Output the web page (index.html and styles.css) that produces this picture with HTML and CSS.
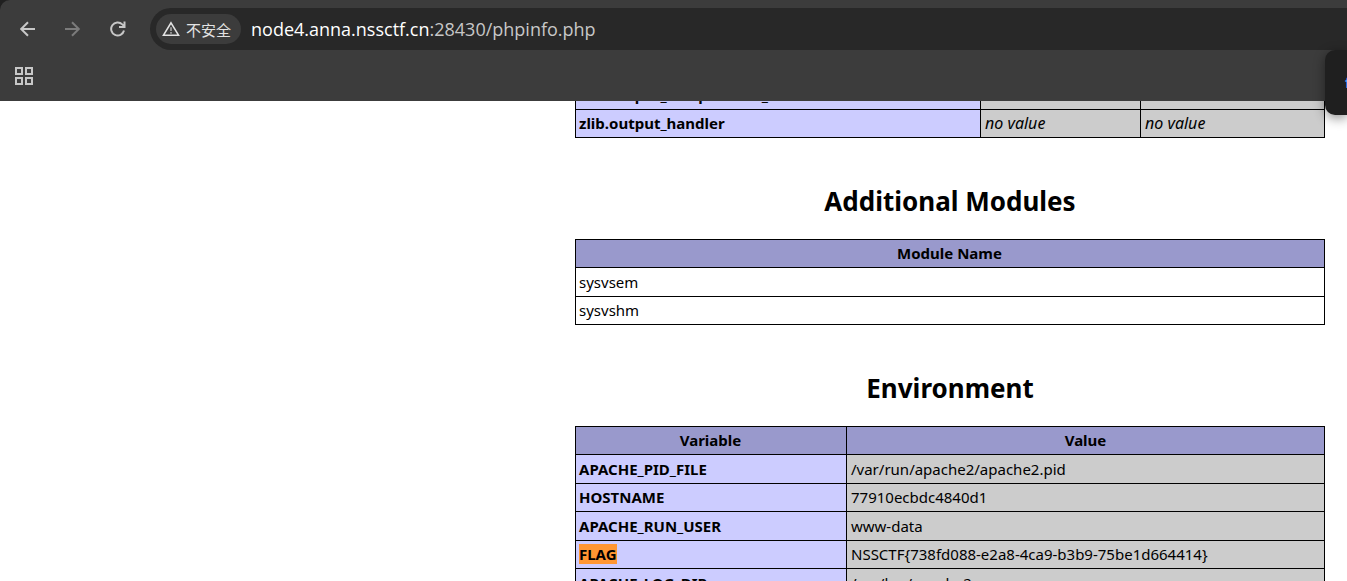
FILE: index.html
```html
<!DOCTYPE html>
<html lang="zh-CN">
<head>
<meta charset="utf-8">
<meta name="viewport" content="width=device-width, initial-scale=1">
<title>phpinfo()</title>
<link rel="stylesheet" href="styles.css">
</head>
<body>
<div class="window">
  <header class="browser">
    <div class="toolbar">
      <nav class="nav">
        <button class="nav-button" type="button" aria-label="Back">
          <svg width="16" height="16" viewBox="0 0 16 16"><path d="M15 8H1.500M8 1.200L1.200 8l6.800 6.800"/></svg>
        </button>
        <button class="nav-button nav-button-off" type="button" aria-label="Forward" disabled>
          <svg width="16" height="16" viewBox="0 0 16 16"><path d="M0 8H13.500M7 1.200L13.800 8l-6.800 6.800"/></svg>
        </button>
        <button class="nav-button" type="button" aria-label="Reload">
          <svg width="16" height="16" viewBox="0 0 16 16"><path d="M14 9.500A6.500 6.500 0 1 1 12.300 3.400L14.300 5.200M14.500 .5V6H9"/></svg>
        </button>
      </nav>
      <div class="address">
        <button class="security" type="button">
          <svg class="warning" width="18" height="16" viewBox="0 0 18 16"><path d="M9 1.800L16.500 14.200H1.500Z"/><path class="warning-mark" d="M9 6.200v3.800M9 11v1.700"/></svg>
          <span>不安全</span>
        </button>
        <div class="url" role="textbox" aria-label="Address" tabindex="0"><span class="host">node4.anna.nssctf.cn</span>:28430/phpinfo.php</div>
      </div>
    </div>
    <div class="bookmarks">
      <button class="apps" type="button" aria-label="Apps">
        <svg width="18" height="18" viewBox="0 0 18 18"><path d="M1 1h6v6H1zM11 1h6v6h-6zM1 11h6v6H1zM11 11h6v6h-6z"/></svg>
      </button>
    </div>
    <aside class="popup"><a href="#flag">f</a></aside>
  </header>
  <main class="page">
    <div class="info">
      <table class="data directives">
        <colgroup><col class="col-directive"><col class="col-local"><col></colgroup>
        <tbody>
          <tr><th scope="row">zlib.output_compression_level</th><td>-1</td><td>-1</td></tr>
          <tr><th scope="row">zlib.output_handler</th><td><i>no value</i></td><td><i>no value</i></td></tr>
        </tbody>
      </table>
      <h2>Additional Modules</h2>
      <table class="data modules">
        <thead><tr><th scope="col">Module Name</th></tr></thead>
        <tbody>
          <tr><td>sysvsem</td></tr>
          <tr><td>sysvshm</td></tr>
        </tbody>
      </table>
      <h2>Environment</h2>
      <table class="data">
        <colgroup><col class="col-variable"><col></colgroup>
        <thead><tr><th scope="col">Variable</th><th scope="col">Value</th></tr></thead>
        <tbody>
          <tr><th scope="row">APACHE_PID_FILE</th><td>/var/run/apache2/apache2.pid</td></tr>
          <tr><th scope="row">HOSTNAME</th><td>77910ecbdc4840d1</td></tr>
          <tr><th scope="row">APACHE_RUN_USER</th><td>www-data</td></tr>
          <tr id="flag"><th scope="row"><mark>FLAG</mark></th><td>NSSCTF{738fd088-e2a8-4ca9-b3b9-75be1d664414}</td></tr>
          <tr><th scope="row">APACHE_LOG_DIR</th><td>/var/log/apache2</td></tr>
        </tbody>
      </table>
    </div>
  </main>
</div>
</body>
</html>
```
FILE: styles.css
```css
* {
  box-sizing: border-box;
}

body {
  margin: 0;
  background: #202020;
  color: #000;
  font-family: "Noto Sans", "Noto Sans CJK SC", sans-serif;
  font-size: 15px;
}

button {
  margin: 0;
  padding: 0;
  border: 0;
  background: none;
  color: inherit;
  font: inherit;
}

svg {
  display: block;
  fill: none;
  stroke: currentColor;
  stroke-width: 2;
}

.window {
  display: flex;
  flex-direction: column;
  height: 100vh;
  overflow: hidden;
}

.browser {
  position: relative;
  z-index: 1;
  flex: none;
  padding-top: 8px;
  border-top-left-radius: 10px;
  background: #3c3c3c;
  color: #c7c7c7;
}

.toolbar {
  display: flex;
  gap: 12px;
  padding-left: 8px;
}

.nav {
  display: flex;
  align-items: center;
  gap: 5px;
}

.nav-button {
  display: grid;
  place-items: center;
  width: 40px;
  height: 40px;
}

.nav-button-off {
  color: #7b7b7b;
}

.address {
  display: flex;
  flex: 1;
  align-items: center;
  gap: 10px;
  height: 42px;
  padding-left: 6px;
  border-radius: 21px 0 0 21px;
  background: #282828;
}

.security {
  display: flex;
  align-items: center;
  gap: 6px;
  height: 30px;
  padding: 0 10px 0 6px;
  border-radius: 15px;
  background: #3c3c3c;
  color: #e3e3e3;
  white-space: nowrap;
}

.warning {
  stroke-width: 1.6;
}

.warning-mark {
  stroke: #a8a8a8;
}

.url {
  font-family: "Open Sans", "Noto Sans", sans-serif;
  font-size: 18px;
  line-height: 24px;
  white-space: nowrap;
}

.host {
  color: #fff;
}

.bookmarks {
  display: flex;
  align-items: center;
  height: 51px;
  padding-left: 15px;
}

.apps {
  color: #c7c7c7;
}

.popup {
  position: absolute;
  top: 50px;
  right: 0;
  width: 22px;
  height: 65px;
  padding: 22px 0 0 20px;
  overflow: hidden;
  border-radius: 10px 0 0 10px;
  background: #1f1f1f;
  box-shadow: 0 3px 12px rgba(0, 0, 0, 0.45);
}

.popup a {
  color: #4da3ff;
  font-weight: bold;
  text-decoration: none;
}

.page {
  flex: 1;
  min-height: 0;
  overflow: hidden;
  background: #fff;
}

.info {
  max-width: 750px;
  margin: -21px 22px 0 auto;
}

.data {
  width: 100%;
  border-collapse: collapse;
  table-layout: fixed;
  line-height: 20px;
}

.data th,
.data td {
  height: 28px;
  padding: 2px 4px 4px;
  border: 1px solid #000;
  text-align: left;
}

.data tr > :first-child {
  padding-left: 3px;
}

.data td {
  background: #ccc;
}

.data tbody th {
  background: #ccf;
}

.data thead th {
  background: #99c;
  text-align: center;
}

.data tbody tr:nth-child(odd) > * {
  height: 29px;
  padding-top: 4px;
}

.data i {
  font-size: 16px;
}

.modules td {
  background: #fff;
}

.col-directive {
  width: 405px;
}

.col-local {
  width: 160px;
}

.col-variable {
  width: 271px;
}

h2 {
  margin: 43px 0 18px;
  font-size: 26px;
  line-height: 40px;
  text-align: center;
}

mark {
  background: #ff9632;
  color: #000;
}
```
